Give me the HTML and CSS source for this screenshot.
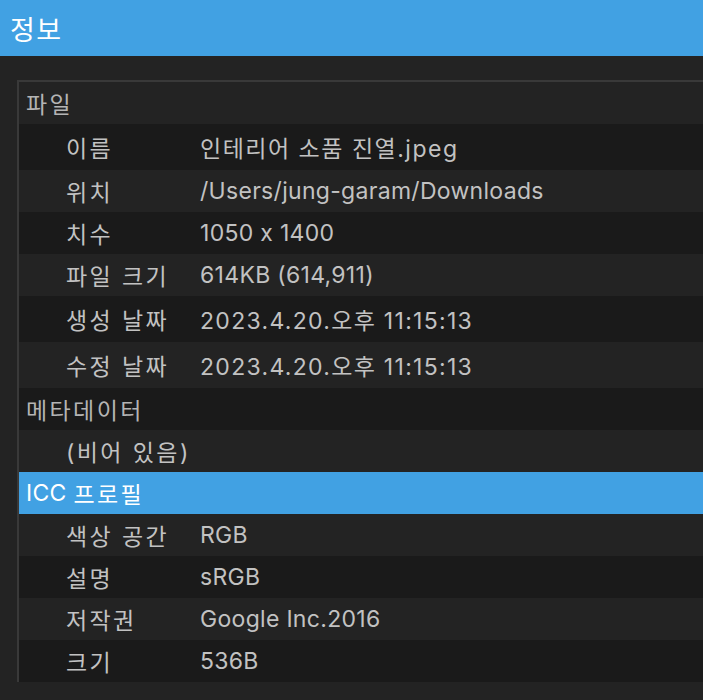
FILE: index.html
```html
<!DOCTYPE html>
<html lang="ko">
<head>
<meta charset="utf-8">
<title>정보</title>
<link rel="stylesheet" href="styles.css">
</head>
<body>
<div class="titlebar">정보</div>
<div class="panel">
  <div class="row group light"><span class="ko">파일</span></div>
  <div class="row item dark tall"><span class="label ko">이름</span><span class="value name">인테리어 소품 진열.jpeg</span></div>
  <div class="row item light"><span class="label ko">위치</span><span class="value">/Users/jung-garam/Downloads</span></div>
  <div class="row item dark"><span class="label ko">치수</span><span class="value">1050 x 1400</span></div>
  <div class="row item light"><span class="label ko">파일 크기</span><span class="value">614KB (614,911)</span></div>
  <div class="row item dark tall"><span class="label ko">생성 날짜</span><span class="value date">2023.4.20.오후 11:15:13</span></div>
  <div class="row item light tall"><span class="label ko">수정 날짜</span><span class="value date">2023.4.20.오후 11:15:13</span></div>
  <div class="row group dark"><span class="ko">메타데이터</span></div>
  <div class="row item light"><span class="label ko">(비어 있음)</span></div>
  <div class="row group selected">ICC&nbsp;<span class="ko">프로필</span></div>
  <div class="row item light"><span class="label ko">색상 공간</span><span class="value">RGB</span></div>
  <div class="row item dark"><span class="label ko">설명</span><span class="value">sRGB</span></div>
  <div class="row item light"><span class="label ko">저작권</span><span class="value">Google Inc.2016</span></div>
  <div class="row item dark"><span class="label ko">크기</span><span class="value">536B</span></div>
</div>
</body>
</html>
```
FILE: styles.css
```css
html, body {
  margin: 0;
  padding: 0;
  background: #232323;
  height: 100%;
  overflow: hidden;
}
body {
  font-family: Inter, "Noto Sans CJK KR", sans-serif;
  font-feature-settings: "calt" 0;
  color: #c2c2c2;
}
.titlebar {
  height: 56px;
  background: #41a1e3;
  color: #ffffff;
  font-size: 27px;
  letter-spacing: 1.5px;
  display: flex;
  align-items: center;
  padding-left: 10px;
  box-sizing: border-box;
}
.panel {
  margin-top: 24px;
  margin-left: 17px;
  border-top: 2px solid #393939;
  border-left: 2px solid #393939;
}
.row {
  height: 42px;
  display: flex;
  align-items: center;
  font-size: 23px;
  letter-spacing: 0.3px;
  white-space: nowrap;
}
.row.tall {
  height: 46px;
}
.light { background: #232323; }
.dark { background: #1a1a1a; }
.selected { background: #41a1e3; color: #ffffff; }
.group {
  padding-left: 7px;
  color: #b4b4b4;
}
.group.selected { color: #ffffff; }
.item {
  padding-left: 47px;
}
.ko {
  letter-spacing: 2.4px;
}
.label {
  width: 134px;
  flex: none;
}
.value {
  flex: none;
}
.value.name {
  letter-spacing: 1.5px;
}
.value.date {
  letter-spacing: 1.3px;
}
```
